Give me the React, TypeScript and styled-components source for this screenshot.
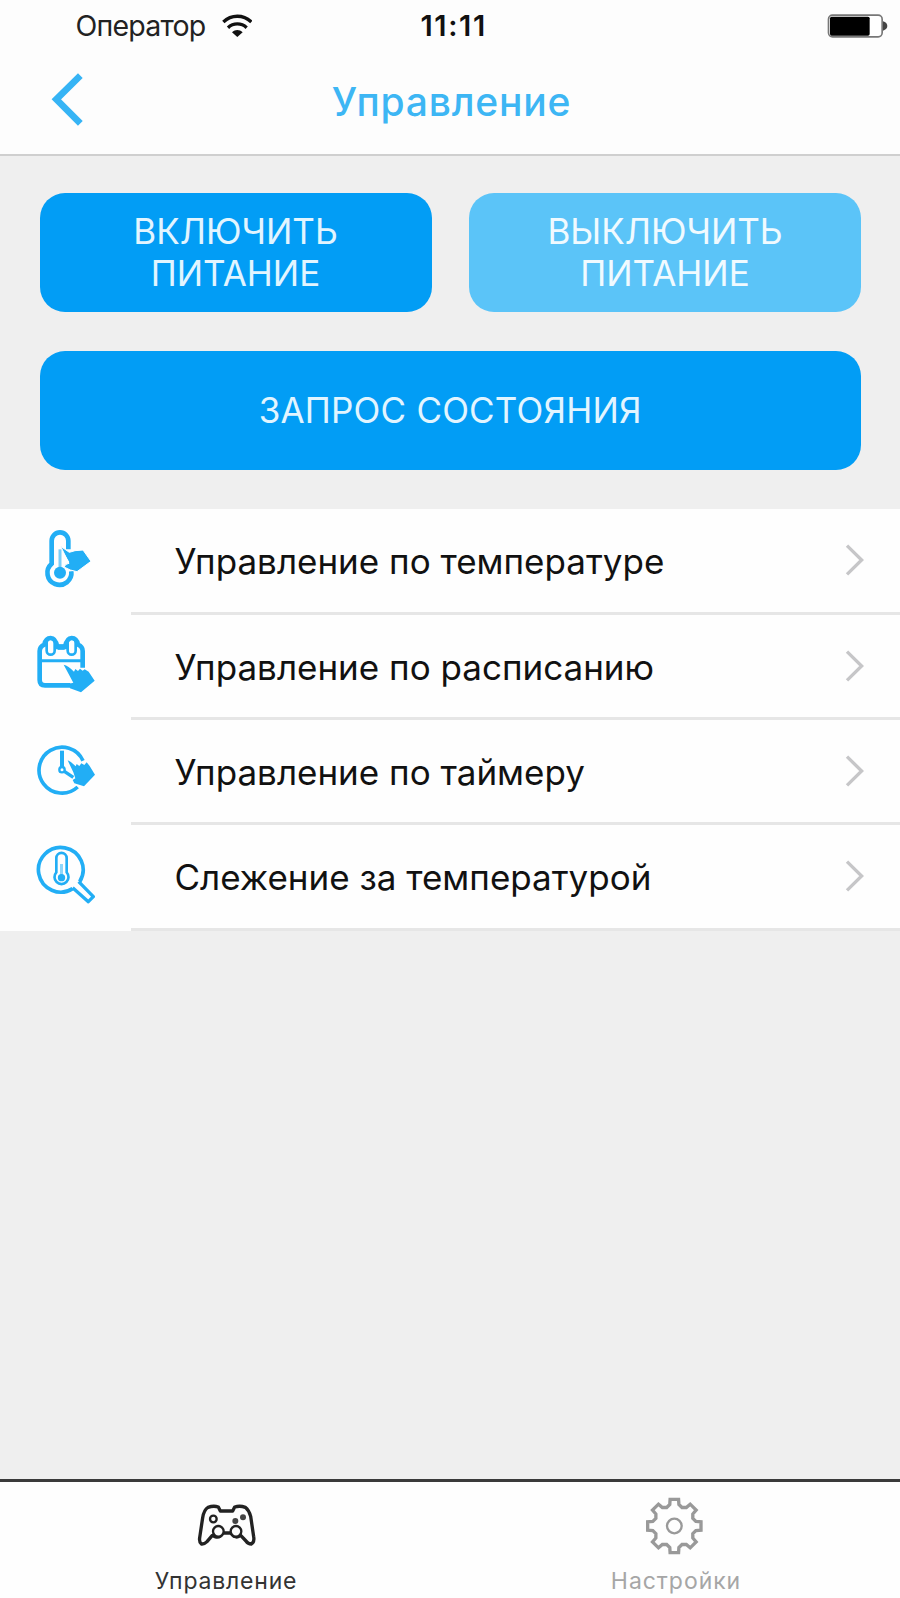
import React from 'react';
import styled, { createGlobalStyle } from 'styled-components';

const blue = '#22aef5';

const GlobalStyle = createGlobalStyle`
  * { box-sizing: border-box; }
  body { margin: 0; background: #efefef; font-family: Inter, 'Liberation Sans', sans-serif; }
  button { font: inherit; border: 0; padding: 0; background: none; color: inherit; }
  svg { display: block; flex: none; }
`;

const Screen = styled.div`
  width: 900px;
  height: 1598px;
  display: flex;
  flex-direction: column;
  background: #efefef;
  overflow: hidden;
`;

const Header = styled.header`
  height: 156px;
  background: #fdfdfd;
  border-bottom: 2px solid #cfcfcf;
`;

const StatusBar = styled.div`
  height: 50px;
  padding-top: 1px;
  display: grid;
  grid-template-columns: 1fr 70px 1fr;
  align-items: center;
  line-height: 49px;
  color: #111;
`;

const Carrier = styled.div`
  display: flex;
  align-items: center;
  gap: 17px;
  padding-left: 75.5px;
  font-size: 28.5px;
  letter-spacing: -0.8px;
  color: #222;
`;

const Clock = styled.div`
  font-size: 29px;
  font-weight: 600;
  letter-spacing: 1.6px;
  padding-left: 5.5px;
  white-space: nowrap;
`;

const BatterySlot = styled.div`
  display: flex;
  justify-content: flex-end;
  padding-right: 12.5px;
`;

const NavBar = styled.nav`
  display: grid;
  grid-template-columns: 150px 1fr 147px;
  height: 104px;
`;

const Title = styled.h1`
  margin: 0;
  text-align: center;
  font-size: 39px;
  font-weight: 500;
  letter-spacing: 0.8px;
  line-height: 104px;
  color: #3db6f4;
`;

const Actions = styled.section`
  display: grid;
  grid-template-columns: 1fr 1fr;
  gap: 38.5px 37.5px;
  padding: 36.5px 39px 38.5px 39.5px;
`;

const ActionButton = styled.button<{ $dim?: boolean; $wide?: boolean }>`
  height: 119.5px;
  grid-column: ${p => (p.$wide ? 'span 2' : 'auto')};
  border-radius: 25px;
  background: ${p => (p.$dim ? '#5bc4f8' : '#029df5')};
  color: ${p => (p.$dim ? '#f0faff' : '#e2f5ff')};
  font-size: 35px;
  line-height: 42px;
  letter-spacing: ${p => (p.$wide ? 0.2 : 0)}px;
  white-space: pre-line;
`;

const Menu = styled.ul`
  margin: 0;
  padding: 0;
  list-style: none;
`;

const MenuItem = styled.li<{ $height: number }>`
  height: ${p => p.$height}px;
  display: grid;
  grid-template-columns: 131px 1fr;
  grid-template-rows: 100%;
  background: #fefefe;
`;

const IconCell = styled.div`
  padding-left: 35px;
`;

const MenuBody = styled.div`
  display: flex;
  justify-content: space-between;
  align-items: flex-start;
  padding: 0 36px 0 43.5px;
  border-bottom: 3px solid #e6e6e6;
  font-size: 35px;
  line-height: 105px;
  color: #111;
  white-space: nowrap;
`;

const TabBar = styled.footer`
  margin-top: auto;
  height: 119px;
  display: grid;
  grid-template-columns: 1fr 1fr;
  background: #fefefe;
  border-top: 3px solid #3a3a3a;
`;

const Tab = styled.button<{ $active?: boolean }>`
  display: flex;
  flex-direction: column;
  align-items: center;
  color: ${p => (p.$active ? '#333' : '#a6a6a6')};
  font-size: 23px;
  letter-spacing: ${p => (p.$active ? 0.8 : 0.95)}px;
`;

const TabLabel = styled.span`
  line-height: 40px;
  margin-top: 4px;
  padding-left: 2px;
`;

const WifiIcon = () => (
  <svg width="30" height="24" viewBox="0 0 90 72" fill="none" stroke="#111" strokeWidth="10">
    <path d="M4 24C28 1 64 1 88 24" />
    <path d="M18 41C34 26 58 26 74 41" />
    <path d="M30 55C40 46 52 46 62 55L46 69Z" fill="#111" stroke="none" />
  </svg>
);

const BatteryIcon = () => (
  <svg width="61" height="24" viewBox="0 0 183 72">
    <rect x="4.500" y="3.500" width="161" height="65" rx="12" fill="#fff" stroke="#777" strokeWidth="5" />
    <rect x="9" y="8" width="119" height="57" rx="5" fill="#000" />
    <path d="M168 22Q181 26 181 36T168 50Z" fill="#444" />
  </svg>
);

const BackIcon = () => (
  <svg width="150" height="104" viewBox="0 150 450 312" fill="none" stroke="#36b4f5" strokeWidth="20">
    <path d="M241 227L169 298L241 370" />
  </svg>
);

const ChevronIcon = () => (
  <svg width="20" height="105" viewBox="0 0 60 315" fill="none" stroke="#c6c6c8" strokeWidth="10">
    <path d="M9 110L53 153L9 196" />
  </svg>
);

const rowIcon = { width: 60, height: 105, fill: 'none', stroke: blue, strokeWidth: 14 };

const TemperatureIcon = () => (
  <svg {...rowIcon} viewBox="45 -3 180 315">
    <path d="M145 118V92A25 25 0 0 0 95 92V161A36 36 0 1 0 154 184" />
    <path d="M120 118V186" strokeWidth="9" strokeOpacity=".6" />
    <circle cx="120" cy="188" r="18" fill={blue} stroke="none" />
    <path d="M122 109L148 127L165 122L189 120L213 154L171 185L151 180L132 171L138 163L147 160Z" fill={blue} stroke="#fff" strokeWidth="3" />
    <path d="M129 129L146 157" stroke="#fff" strokeWidth="4" />
  </svg>
);

const ScheduleIcon = () => (
  <svg {...rowIcon} viewBox="45 315 180 315">
    <path d="M151 526H75Q59 526 59 510V423Q59 410 73 404Q77 384 92 384Q107 384 112 411H135Q140 384 155 384Q170 384 174 404Q188 410 188 423V473" />
    <rect x="80" y="386" width="24" height="48" rx="12" strokeWidth="8" />
    <rect x="143" y="386" width="24" height="48" rx="12" strokeWidth="8" />
    <path d="M113 411H134" strokeWidth="17" />
    <path d="M60 452H188" strokeWidth="9" />
    <path d="M131 464Q145 467 162 485L166 477L174 483L180 476L188 482L194 478L206 485L224 512L183 547L150 535L147 521L160 518Z" fill={blue} stroke="none" />
  </svg>
);

const TimerIcon = () => (
  <svg {...rowIcon} viewBox="45 0 180 315" strokeWidth="11">
    <path d="M189 122A69 69 0 1 0 173 201" />
    <path d="M126 92V141" strokeWidth="12" />
    <circle cx="126" cy="149" r="8" strokeWidth="7" />
    <path d="M133 154L160 172" strokeWidth="10" />
    <path d="M143 121Q155 126 167 139L170 132L178 138L184 130L193 135L200 127L209 138L225 164L192 199L163 190L158 180L166 175L160 157Z" fill={blue} stroke="none" />
  </svg>
);

const TrackingIcon = () => (
  <svg {...rowIcon} viewBox="45 315 180 315" strokeWidth="11">
    <path d="M158 506A67 67 0 1 1 179 485" />
    <path d="M158 503L205 545L220 530L176 485" strokeWidth="10" strokeLinejoin="round" />
    <path d="M109 457V414A15 15 0 0 1 140 414V457A21 21 0 1 1 109 457Z" strokeWidth="8" />
    <path d="M124.500 432V467" strokeWidth="9" strokeOpacity=".5" />
    <circle cx="124.500" cy="473" r="11" fill={blue} stroke="none" />
  </svg>
);

const GamepadIcon = () => (
  <svg width="66" height="75" viewBox="576 36 198 225" fill="none" stroke="#222" strokeWidth="10" strokeLinejoin="round">
    <path d="M624 112Q641 106 655 111L661 123H698L704 111Q720 106 736 112Q747 121 752 139L761 200Q764 217 754 222Q744 222 738 213L722 196Q713 204 702 199L692 189H668Q660 205 645 200L637 196L621 215Q613 223 604 222Q597 217 599 203L608 143Q612 119 624 112Z" />
    <circle cx="655" cy="184" r="16" strokeWidth="7" fill="#fefefe" />
    <circle cx="708" cy="184" r="16" strokeWidth="7" fill="#fefefe" />
    <circle cx="640" cy="147" r="10" strokeWidth="7" />
    <g fill="#444" stroke="none">
      <circle cx="706" cy="153" r="9" />
      <circle cx="729" cy="142" r="9" />
    </g>
  </svg>
);

const gearOutline = Array.from({ length: 8 }, (_, i) => {
  const at = (radius: number, degrees: number) => {
    const a = ((i * 45 + degrees) * Math.PI) / 180;
    return `${(223 + radius * Math.cos(a)).toFixed(1)} ${(168 + radius * Math.sin(a)).toFixed(1)}`;
  };
  return `${i ? 'L' : 'M'}${at(66, -12)}L${at(81, -9)}L${at(81, 9)}L${at(66, 12)}L${at(60, 22.5)}`;
}).join('');

const GearIcon = () => (
  <svg width="66" height="75" viewBox="126 36 198 225" fill="none" stroke="#999" strokeWidth="10">
    <path d={`${gearOutline}Z`} />
    <circle cx="223" cy="168" r="22" strokeWidth="7" />
  </svg>
);

const menu = [
  { label: 'Управление по температуре', Icon: TemperatureIcon, height: 106 },
  { label: 'Управление по расписанию', Icon: ScheduleIcon, height: 105 },
  { label: 'Управление по таймеру', Icon: TimerIcon, height: 105 },
  { label: 'Слежение за температурой', Icon: TrackingIcon, height: 106 },
];

export default function App() {
  return (
    <Screen>
      <GlobalStyle />
      <Header>
        <StatusBar>
          <Carrier>Оператор<WifiIcon /></Carrier>
          <Clock>11:11</Clock>
          <BatterySlot><BatteryIcon /></BatterySlot>
        </StatusBar>
        <NavBar>
          <BackIcon />
          <Title>Управление</Title>
        </NavBar>
      </Header>
      <Actions>
        <ActionButton>{'ВКЛЮЧИТЬ\nПИТАНИЕ'}</ActionButton>
        <ActionButton $dim>{'ВЫКЛЮЧИТЬ\nПИТАНИЕ'}</ActionButton>
        <ActionButton $wide>ЗАПРОС СОСТОЯНИЯ</ActionButton>
      </Actions>
      <Menu>
        {menu.map(({ label, Icon, height }) => (
          <MenuItem key={label} $height={height}>
            <IconCell><Icon /></IconCell>
            <MenuBody>{label}<ChevronIcon /></MenuBody>
          </MenuItem>
        ))}
      </Menu>
      <TabBar>
        <Tab $active><GamepadIcon /><TabLabel>Управление</TabLabel></Tab>
        <Tab><GearIcon /><TabLabel>Настройки</TabLabel></Tab>
      </TabBar>
    </Screen>
  );
}
